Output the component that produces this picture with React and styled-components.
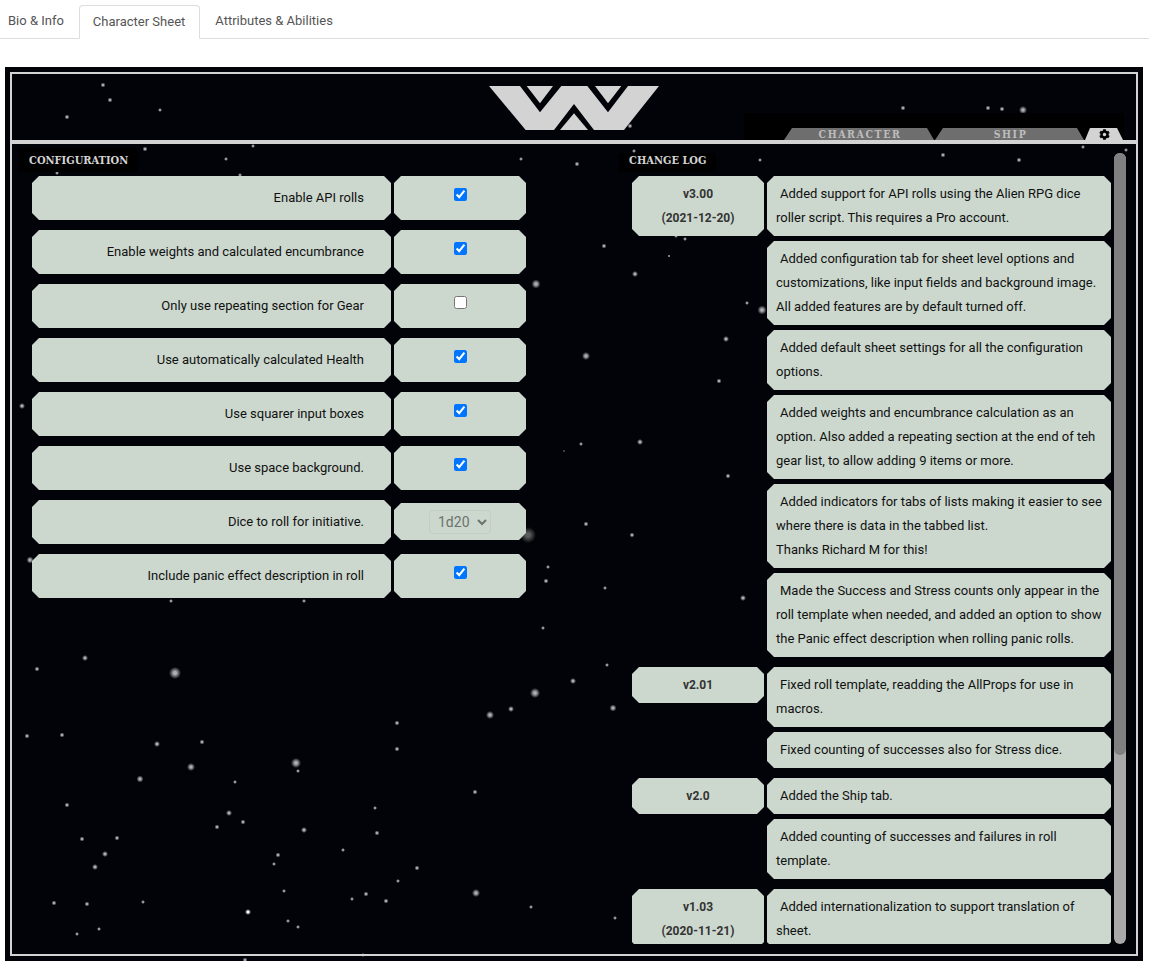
import styled, { createGlobalStyle } from "styled-components";
import { FaCog } from "react-icons/fa";

const GlobalStyle = createGlobalStyle`
  html, body {
    margin: 0;
    padding: 0;
    background: #fff;
    overflow: hidden;
  }
  * {
    box-sizing: border-box;
  }
`;

// [x, y, radius, colour] in page coordinates, read off the reference
const STARS = [
  [103, 85, 2.5], [110, 100, 2.5], [67, 117, 2.5], [160, 110, 2], [145, 149, 2.5],
  [253, 146, 2], [226, 159, 2], [57, 173, 2], [240, 175, 2], [521, 159, 2],
  [577, 164, 2.5], [630, 126, 2.5], [634, 151, 2], [760, 160, 2], [903, 108, 2.5],
  [988, 108, 2.5], [1002, 109, 2.5], [1023, 110, 4], [943, 155, 2.5], [1019, 160, 2.5],
  [1083, 147, 2], [1126, 150, 2], [676, 236, 2], [685, 239, 2], [669, 256, 1.5],
  [604, 246, 2.5], [635, 274, 3], [536, 284, 4.5], [747, 303, 2], [762, 310, 4.5],
  [726, 339, 3], [719, 381, 2.5], [586, 356, 4], [581, 444, 2], [564, 451, 1.5, "#555"],
  [640, 442, 3], [728, 476, 2.5], [22, 406, 3], [30, 560, 3.5], [586, 524, 2.5],
  [632, 535, 2.5], [528, 535, 8, "#5c5c5c"], [548, 567, 2], [546, 581, 2.5], [605, 588, 2],
  [743, 598, 3], [171, 601, 2], [304, 601, 2], [85, 658, 3], [37, 669, 2.5],
  [175, 673, 6], [27, 736, 2.5], [62, 735, 2.5], [157, 744, 3], [202, 742, 2.5],
  [191, 767, 4], [140, 779, 3.5], [296, 763, 5], [298, 771, 2], [235, 782, 2],
  [229, 813, 3], [243, 822, 2.5], [217, 827, 2.5], [304, 830, 3], [67, 805, 2.5],
  [82, 839, 2.5], [117, 838, 2.5], [105, 854, 3], [95, 867, 3], [278, 855, 2.5],
  [274, 864, 2], [284, 891, 2], [54, 903, 2.5], [87, 904, 2.5], [143, 902, 2],
  [248, 912, 3, "#fff"], [288, 921, 2], [298, 927, 2], [77, 934, 2], [99, 929, 2],
  [245, 960, 2.5], [543, 628, 2], [607, 665, 2], [573, 681, 3], [535, 693, 5],
  [511, 709, 3], [490, 715, 4], [613, 708, 3.5], [397, 723, 2.5], [397, 749, 2.5],
  [475, 792, 2.5], [375, 808, 2], [377, 833, 2.5], [343, 850, 2], [417, 868, 2.5],
  [398, 881, 2], [366, 894, 2.5], [352, 899, 2], [386, 901, 2.5], [476, 893, 4],
  [531, 907, 2], [615, 918, 2], [363, 955, 2],
];

const starField = STARS.map(([x, y, r, color = "#aeaeb4"]) => {
  return `radial-gradient(circle ${r}px at ${x - 5}px ${y - 67}px, ${color} 25%, transparent 100%)`;
}).join(", ");

const octagon = (cut) => `polygon(
  ${cut}px 0, calc(100% - ${cut}px) 0, 100% ${cut}px, 100% calc(100% - ${cut}px),
  calc(100% - ${cut}px) 100%, ${cut}px 100%, 0 calc(100% - ${cut}px), 0 ${cut}px
)`;

const Page = styled.div`
  width: 1149px;
  font-family: Roboto, "Liberation Sans", sans-serif;
`;

const PageTabs = styled.nav`
  display: flex;
  height: 39px;
  padding-top: 5px;
  border-bottom: 1px solid #ddd;
`;

const PageTab = styled.div`
  height: 34px;
  padding: 0 ${(p) => (p.$active ? "14px 0 13px" : "15px")};
  font-size: 13px;
  line-height: 32px;
  color: #555;
  ${(p) =>
    p.$active &&
    `
    background: #fff;
    border: 1px solid #ddd;
    border-bottom-color: #fff;
    border-radius: 4px 4px 0 0;
  `}

  &:first-child {
    padding-left: 8px;
  }
`;

const Sheet = styled.main`
  height: 894px;
  margin: 28px 6px 0 5px;
  padding: 5px;
  background-color: #020308;
  background-image: ${starField};
`;

const Frame = styled.div`
  height: 100%;
  display: flex;
  flex-direction: column;
  border: 2px solid #d3d3d3;
`;

const Header = styled.header`
  display: grid;
  grid-template-columns: 1fr 180px 1fr;
  height: 70px;
  padding-top: 6px;
  border-bottom: 4px solid #d3d3d3;
`;

const Logo = styled.svg`
  display: block;
  width: 180px;
  height: 55px;
  fill: #d3d3d3;
`;

const SheetTabs = styled.nav`
  grid-column: 3;
  justify-self: end;
  align-self: end;
  display: flex;
  gap: 1px;
  width: 380px;
  height: 27px;
  margin-right: 12px;
  padding: 15px 0 0 40px;
  background: #000;
`;

const SheetTab = styled.div`
  width: ${(p) => p.$width}px;
  height: 12px;
  padding-left: 2px;
  font-family: "DejaVu Serif Condensed", "DejaVu Serif", serif;
  font-size: 10.5px;
  font-weight: 700;
  line-height: 12px;
  letter-spacing: 1.6px;
  text-align: center;
  color: #bdbdbd;
  background: #6e6e6e;
  clip-path: polygon(8px 0, calc(100% - 7px) 0, 100% 100%, 0 100%);
`;

const GearTab = styled.div`
  display: flex;
  align-items: center;
  justify-content: center;
  width: 38px;
  height: 12px;
  font-size: 11px;
  color: #000;
  background: #d3d3d3;
  clip-path: polygon(5px 0, calc(100% - 6px) 0, 100% 100%, 0 100%);
`;

const Content = styled.div`
  flex: 1;
  min-height: 0;
  display: grid;
  grid-template-columns: 607px 1fr;
  padding: 9px 10px 10px 0;
`;

const ConfigColumn = styled.section`
  padding-left: 17px;
`;

const Heading = styled.h2`
  display: inline-block;
  vertical-align: top;
  margin: 0 0 9px -10px;
  padding: 1px 10px 0;
  height: 14px;
  font-family: "DejaVu Serif Condensed", "DejaVu Serif", serif;
  font-size: 11px;
  font-weight: 700;
  line-height: 14px;
  color: #d3d3d3;
  background: #000;
  box-shadow: 0 -5px 0 #000, 0 5px 0 #000;
`;

const HeadingRow = styled.div`
  height: 23px;
`;

const ConfigRows = styled.div`
  display: flex;
  flex-direction: column;
  gap: 10px;
  margin-left: 3px;
`;

const ConfigRow = styled.div`
  display: grid;
  grid-template-columns: 359px 132px;
  column-gap: 3px;
  height: 44px;
`;

const Plate = styled.div`
  background: #ccd8ce;
  color: #111;
  clip-path: ${octagon(7)};
`;

const ConfigLabel = styled(Plate)`
  padding-right: 27px;
  font-size: 13px;
  line-height: 44px;
  text-align: right;
`;

const ConfigValue = styled(Plate)`
  display: flex;
  justify-content: center;
  padding-top: 12px;
`;

const SelectValue = styled(Plate)`
  display: flex;
  justify-content: center;
  align-items: center;
  align-self: start;
  height: 37px;
  margin-top: 3px;
`;

const Check = styled.input`
  width: 13px;
  height: 13px;
  margin: 0;
`;

const Select = styled.select`
  width: 62px;
  height: 24px;
  padding: 0 0 0 4px;
  font-family: Roboto, sans-serif;
  font-size: 14px;
  color: #6a726c;
  background: transparent;
  border: 1px solid #c2cec4;
  border-radius: 4px;
  opacity: 1;
`;

const LogPanel = styled.section`
  display: grid;
  grid-template-columns: 1fr 12px;
  height: 791px;
`;

const LogScroller = styled.div`
  min-width: 0;
  padding: 0 3px 0 10px;
  overflow: hidden;
`;

const ScrollTrack = styled.div`
  background: #a9a9a9;
  border-radius: 6px;
`;

const ScrollThumb = styled.div`
  height: 602px;
  background: #808080;
  border-radius: 6px;
`;

const LogList = styled.div`
  display: flex;
  flex-direction: column;
  gap: 10px;
  margin-left: 3px;
`;

const LogGroup = styled.article`
  display: grid;
  grid-template-columns: 132px 344px;
  column-gap: 3px;
  align-items: start;
`;

const Version = styled(Plate)`
  padding: 6px 0;
  font-size: 12px;
  font-weight: 700;
  line-height: 24px;
  text-align: center;
  color: #333;
`;

const Entries = styled.div`
  display: flex;
  flex-direction: column;
  gap: 5px;
`;

const Entry = styled(Plate)`
  padding: 6px 9px;
  font-size: 13px;
  line-height: 24px;
  text-indent: 4px;
`;

const WeylandLogo = () => (
  <Logo viewBox="0 0 540 165" aria-label="Weyland-Yutani">
    <polygon points="15,18 108,18 168,97 232,18 310,18 372,97 432,18 525,18 420,150 330,150 270,72 210,150 125,150" />
    <polygon points="128,18 207,18 168,70" />
    <polygon points="333,18 412,18 372,70" />
    <polygon points="228,150 312,150 270,100" />
  </Logo>
);

const CONFIG = [
  { label: "Enable API rolls", checked: true },
  { label: "Enable weights and calculated encumbrance", checked: true },
  { label: "Only use repeating section for Gear", checked: false },
  { label: "Use automatically calculated Health", checked: true },
  { label: "Use squarer input boxes", checked: true },
  { label: "Use space background.", checked: true },
  { label: "Dice to roll for initiative.", select: true },
  { label: "Include panic effect description in roll", checked: true },
];

const CHANGES = [
  {
    version: ["v3.00", "(2021-12-20)"],
    entries: [
      "Added support for API rolls using the Alien RPG dice roller script. This requires a Pro account.",
      "Added configuration tab for sheet level options and customizations, like input fields and background image. All added features are by default turned off.",
      "Added default sheet settings for all the configuration options.",
      "Added weights and encumbrance calculation as an option. Also added a repeating section at the end of teh gear list, to allow adding 9 items or more.",
      <>
        Added indicators for tabs of lists making it easier to see where there is data in the tabbed list.
        <br />
        Thanks Richard M for this!
      </>,
      "Made the Success and Stress counts only appear in the roll template when needed, and added an option to show the Panic effect description when rolling panic rolls.",
    ],
  },
  {
    version: ["v2.01"],
    entries: [
      "Fixed roll template, readding the AllProps for use in macros.",
      "Fixed counting of successes also for Stress dice.",
    ],
  },
  {
    version: ["v2.0"],
    entries: [
      "Added the Ship tab.",
      "Added counting of successes and failures in roll template.",
    ],
  },
  {
    version: ["v1.03", "(2020-11-21)"],
    entries: ["Added internationalization to support translation of sheet."],
  },
];

export default function App() {
  return (
    <Page>
      <GlobalStyle />
      <PageTabs>
        <PageTab>Bio &amp; Info</PageTab>
        <PageTab $active>Character Sheet</PageTab>
        <PageTab>Attributes &amp; Abilities</PageTab>
      </PageTabs>

      <Sheet>
        <Frame>
          <Header>
            <div />
            <WeylandLogo />
            <SheetTabs>
              <SheetTab $width={150}>CHARACTER</SheetTab>
              <SheetTab $width={149}>SHIP</SheetTab>
              <GearTab>
                <FaCog />
              </GearTab>
            </SheetTabs>
          </Header>

          <Content>
            <ConfigColumn>
              <HeadingRow>
                <Heading>CONFIGURATION</Heading>
              </HeadingRow>
              <ConfigRows>
                {CONFIG.map((item) => (
                  <ConfigRow key={item.label}>
                    <ConfigLabel>{item.label}</ConfigLabel>
                    {item.select ? (
                      <SelectValue>
                        <Select disabled defaultValue="1d20">
                          <option>1d20</option>
                        </Select>
                      </SelectValue>
                    ) : (
                      <ConfigValue>
                        <Check type="checkbox" defaultChecked={item.checked} />
                      </ConfigValue>
                    )}
                  </ConfigRow>
                ))}
              </ConfigRows>
            </ConfigColumn>

            <LogPanel>
              <LogScroller>
                <HeadingRow>
                  <Heading>CHANGE LOG</Heading>
                </HeadingRow>
                <LogList>
                  {CHANGES.map((change) => (
                    <LogGroup key={change.version[0]}>
                      <Version>
                        {change.version.map((line) => (
                          <div key={line}>{line}</div>
                        ))}
                      </Version>
                      <Entries>
                        {change.entries.map((entry, i) => (
                          <Entry key={i}>{entry}</Entry>
                        ))}
                      </Entries>
                    </LogGroup>
                  ))}
                </LogList>
              </LogScroller>
              <ScrollTrack>
                <ScrollThumb />
              </ScrollTrack>
            </LogPanel>
          </Content>
        </Frame>
      </Sheet>
    </Page>
  );
}
